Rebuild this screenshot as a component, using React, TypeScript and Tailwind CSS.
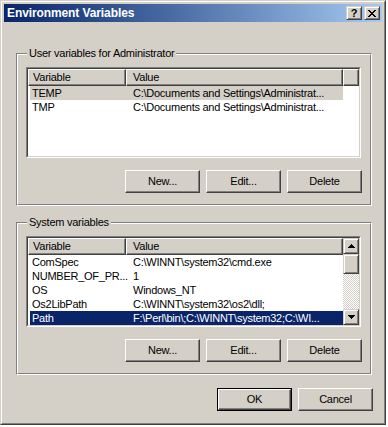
import React from "react";

const raised =
  "border border-t-white border-l-white border-r-[#404040] border-b-[#404040] shadow-[inset_-1px_-1px_0_#808080]";
const raisedSmall =
  "border border-t-[#d4d0c8] border-l-[#d4d0c8] border-r-[#404040] border-b-[#404040] shadow-[inset_1px_1px_0_#ffffff,inset_-1px_-1px_0_#808080]";

function Button({ label, def = false }: { label: string; def?: boolean }) {
  if (def) {
    return (
      <div className="w-[75px] h-[23px] border border-black">
        <div className={`w-full h-full flex items-center justify-center ${raised}`}>{label}</div>
      </div>
    );
  }
  return (
    <div className={`w-[75px] h-[23px] flex items-center justify-center ${raised}`}>{label}</div>
  );
}

function UpArrow() {
  return (
    <svg width="7" height="4" viewBox="0 0 7 4" shapeRendering="crispEdges">
      <path d="M3 0h1v1H3zM2 1h3v1H2zM1 2h5v1H1zM0 3h7v1H0z" fill="#000" />
    </svg>
  );
}
function DownArrow() {
  return (
    <svg width="7" height="4" viewBox="0 0 7 4" shapeRendering="crispEdges">
      <path d="M0 0h7v1H0zM1 1h5v1H1zM2 2h3v1H2zM3 3h1v1H3z" fill="#000" />
    </svg>
  );
}

type Row = { name: string; value: string; sel?: "gray" | "blue" };

function ListView({ rows, scroll = false }: { rows: Row[]; scroll?: boolean }) {
  return (
    <div className="w-[335px] h-[91px] border border-t-[#808080] border-l-[#808080] border-r-white border-b-white">
      <div className="w-full h-full border border-t-[#404040] border-l-[#404040] border-r-[#d4d0c8] border-b-[#d4d0c8] bg-white flex overflow-hidden">
        <div className="flex-1 min-w-0 flex flex-col">
          <div className="flex h-[17px] shrink-0 bg-[#d4d0c8]">
            <div className={`w-[98px] h-full flex items-center pl-[4px] ${raised}`}>Variable</div>
            <div className={`w-[217px] h-full flex items-center pl-[6px] ${raised}`}>Value</div>
            {!scroll && <div className={`flex-1 h-full ${raised}`} />}
          </div>
          {rows.map((r) => (
            <div key={r.name} className="h-[14px] flex pl-[2px] leading-[14px]">
              <div
                className={`flex w-[313px] ${
                  r.sel === "gray"
                    ? "bg-[#d4d0c8] text-black"
                    : r.sel === "blue"
                    ? "bg-[#0a246a] text-white"
                    : "text-black"
                }`}
              >
                <span className="w-[96px] shrink-0 pl-[2px] whitespace-nowrap">{r.name}</span>
                <span className="flex-1 pl-[7px] whitespace-nowrap overflow-hidden">{r.value}</span>
              </div>
            </div>
          ))}
        </div>
        {scroll && (
          <div className="w-[16px] h-full flex flex-col shrink-0">
            <div className={`h-[16px] flex items-center justify-center bg-[#d4d0c8] ${raisedSmall}`}>
              <UpArrow />
            </div>
            <div className={`h-[20px] bg-[#d4d0c8] ${raisedSmall}`} />
            <div className="flex-1 bg-[repeating-conic-gradient(#d4d0c8_0_25%,#ffffff_0_50%)] bg-[length:2px_2px]" />
            <div className={`h-[16px] flex items-center justify-center bg-[#d4d0c8] ${raisedSmall}`}>
              <DownArrow />
            </div>
          </div>
        )}
      </div>
    </div>
  );
}

function Group({
  title,
  rows,
  scroll,
  className = "",
}: {
  title: string;
  rows: Row[];
  scroll?: boolean;
  className?: string;
}) {
  return (
    <div
      className={`relative w-[356px] h-[153px] border border-t-[#808080] border-l-[#808080] border-r-white border-b-white ${className}`}
    >
      <div className="w-full h-full border border-t-white border-l-white border-r-[#808080] border-b-[#808080] pt-[12px] pl-[8px] pr-[8px] flex flex-col">
        <ListView rows={rows} scroll={scroll} />
        <div className="mt-[12px] flex justify-end gap-[6px]">
          <Button label="New..." />
          <Button label="Edit..." />
          <Button label="Delete" />
        </div>
      </div>
      <span className="absolute left-[10px] top-[-7px] px-[2px] leading-[13px] bg-[#d4d0c8]">{title}</span>
    </div>
  );
}

export default function App() {
  const userRows: Row[] = [
    { name: "TEMP", value: "C:\\Documents and Settings\\Administrat...", sel: "gray" },
    { name: "TMP", value: "C:\\Documents and Settings\\Administrat..." },
  ];
  const sysRows: Row[] = [
    { name: "ComSpec", value: "C:\\WINNT\\system32\\cmd.exe" },
    { name: "NUMBER_OF_PR...", value: "1" },
    { name: "OS", value: "Windows_NT" },
    { name: "Os2LibPath", value: "C:\\WINNT\\system32\\os2\\dll;" },
    { name: "Path", value: "F:\\Perl\\bin\\;C:\\WINNT\\system32;C:\\WI...", sel: "blue" },
  ];
  return (
    <div className="w-[388px] h-[427px] bg-white text-[11px] tracking-[-0.25px] text-black font-['Liberation_Sans',Arial,sans-serif]">
      <div className="w-[386px] h-[425px] border border-t-[#d4d0c8] border-l-[#d4d0c8] border-r-[#404040] border-b-[#404040] bg-[#d4d0c8]">
        <div className="w-full h-full border border-t-white border-l-white border-r-[#808080] border-b-[#808080] p-[2px] flex flex-col">
          <div className="h-[18px] shrink-0 flex items-center bg-linear-to-r from-[#0a246a] to-[#a6caf0] pl-[3px] pr-[2px]">
            <span className="font-bold text-white text-[12px] leading-[14px] tracking-[-0.1px]">Environment Variables</span>
            <div className="ml-auto flex gap-[2px]">
              <div className={`w-[16px] h-[14px] flex items-center justify-center bg-[#d4d0c8] ${raisedSmall}`}>
                <span className="font-bold text-[11px] leading-[11px] text-black">?</span>
              </div>
              <div className={`w-[16px] h-[14px] flex items-center justify-center bg-[#d4d0c8] ${raisedSmall}`}>
                <svg width="8" height="7" viewBox="0 0 8 7" shapeRendering="crispEdges">
                  <path
                    d="M0 0h2v1H0zM6 0h2v1H6zM1 1h2v1H1zM5 1h2v1H5zM2 2h4v1H2zM3 3h2v1H3zM2 4h4v1H2zM1 5h2v1H1zM5 5h2v1H5zM0 6h2v1H0zM6 6h2v1H6z"
                    fill="#000"
                  />
                </svg>
              </div>
            </div>
          </div>
          <div className="flex-1 flex flex-col pl-[12px]">
            <Group className="mt-[31px]" title="User variables for Administrator" rows={userRows} />
            <Group className="mt-[16px]" title="System variables" rows={sysRows} scroll />
            <div className="mt-[13px] flex justify-end gap-[6px] pr-[9px]">
              <Button label="OK" def />
              <Button label="Cancel" />
            </div>
          </div>
        </div>
      </div>
    </div>
  );
}
